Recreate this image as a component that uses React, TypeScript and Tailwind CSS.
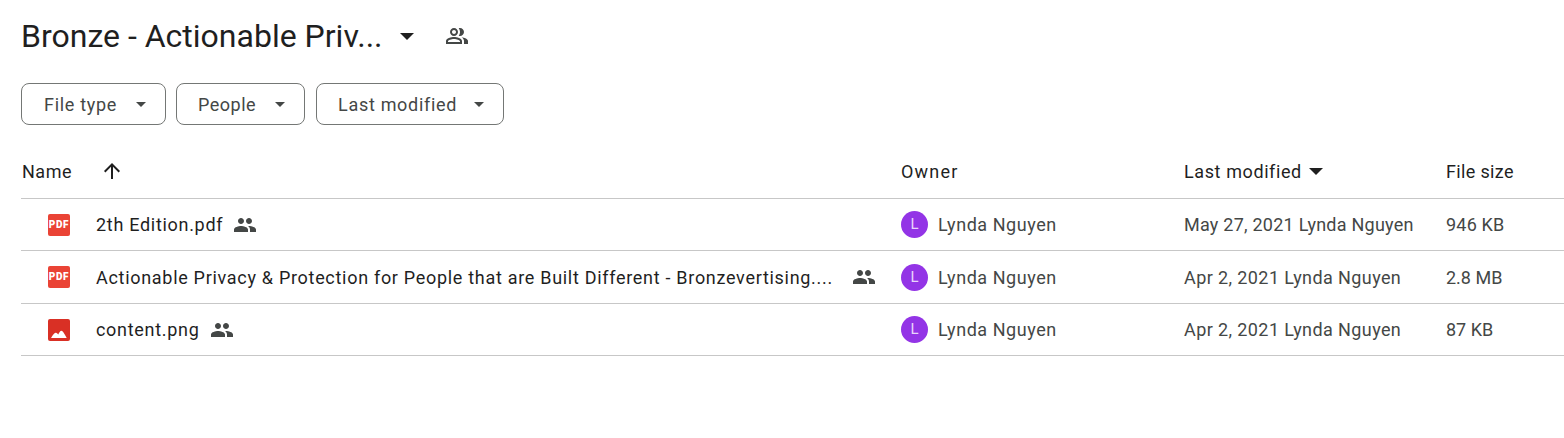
import React from "react";

function Caret({ className }: { className: string }) {
  return (
    <svg viewBox="0 0 10 5" className={className} fill="currentColor">
      <path d="M0 0l5 5 5-5z" />
    </svg>
  );
}

function People({ className }: { className: string }) {
  return (
    <svg viewBox="0 0 24 24" className={className} fill="currentColor">
      <path d="M16 11c1.66 0 2.99-1.34 2.99-3S17.66 5 16 5s-3 1.34-3 3 1.34 3 3 3zm-8 0c1.66 0 2.99-1.34 2.99-3S9.66 5 8 5 5 6.34 5 8s1.34 3 3 3zm0 2c-2.33 0-7 1.17-7 3.5V19h14v-2.5C15 14.17 10.33 13 8 13zm8 0c-.29 0-.62.02-.97.05 1.16.84 1.97 1.97 1.97 3.45V19h6v-2.5c0-2.33-4.67-3.5-7-3.5z" />
    </svg>
  );
}

function PeopleOutline({ className }: { className: string }) {
  return (
    <svg viewBox="0 0 24 24" className={className} fill="currentColor">
      <path d="M16.67 13.13C18.04 14.06 19 15.32 19 17v3h4v-3c0-2.18-3.57-3.47-6.33-3.87zM15 12c2.21 0 4-1.79 4-4s-1.79-4-4-4c-.47 0-.91.1-1.33.24C14.5 5.27 15 6.58 15 8s-.5 2.73-1.33 3.76c.42.14.86.24 1.33.24zM9 12c2.21 0 4-1.79 4-4s-1.79-4-4-4-4 1.79-4 4 1.79 4 4 4zm0-6c1.1 0 2 .9 2 2s-.9 2-2 2-2-.9-2-2 .9-2 2-2zM9 13c-2.67 0-8 1.34-8 4v3h16v-3c0-2.66-5.33-4-8-4zm6 5H3v-.99C3.2 16.29 6.3 15 9 15s5.8 1.29 6 2v1z" />
    </svg>
  );
}

function PdfIcon() {
  return (
    <div className="flex h-[22px] w-[22px] items-center justify-center rounded-[2px] bg-[#ea4335]">
      <span className="text-[10px] font-black leading-none tracking-[0.6px] text-white">PDF</span>
    </div>
  );
}

function ImageIcon() {
  return (
    <svg viewBox="0 0 22 22" className="h-[22px] w-[22px]">
      <rect width="22" height="22" rx="2" fill="#d93025" />
      <path d="M3 19c.9-1.2 1.8-3 3-4.2.8-.8 1.4-1 2-1 .7 0 1.3 1 2.2 1.6.9-1.4 2-3.6 3.3-3.6 1.4 0 2.4 2.4 3.4 4 .8 1.1 1.3 2.2 1.8 3.2z" fill="#fff" />
    </svg>
  );
}

function Filter({ label, w, track, pl }: { label: string; w: string; track: string; pl: string }) {
  return (
    <button className={`flex h-[42px] items-center justify-between rounded-[8px] border border-[#747775] pr-[19px] text-[18px] text-[#444746] ${pl} ${w}`}>
      <span className={track}>{label}</span>
      <Caret className="h-[5px] w-[10px]" />
    </button>
  );
}

const rows = [
  { name: "2th Edition.pdf", kind: "pdf", date: "May 27, 2021 Lynda Nguyen", dateTrack: "tracking-[0.24px]", size: "946 KB", sizeTrack: "tracking-[0.2px]", wide: false },
  { name: "Actionable Privacy & Protection for People that are Built Different - Bronzevertising....", kind: "pdf", date: "Apr 2, 2021 Lynda Nguyen", dateTrack: "tracking-[0.4px]", size: "2.8 MB", sizeTrack: "tracking-[0px]", wide: true },
  { name: "content.png", kind: "img", date: "Apr 2, 2021 Lynda Nguyen", dateTrack: "tracking-[0.4px]", size: "87 KB", sizeTrack: "tracking-[0px]", wide: false },
];

export default function App() {
  return (
    <div className="h-[438px] w-[1564px] overflow-hidden bg-white pl-[21px] text-[#1f1f1f] [font-family:Roboto,sans-serif]">
      <div className="flex h-[72px] items-center">
        <h1 className="w-[359px] whitespace-nowrap text-[32px] font-normal leading-none">Bronze - Actionable Priv...</h1>
        <Caret className="ml-[20px] h-[7px] w-[14px]" />
        <PeopleOutline className="ml-[31px] h-[24px] w-[24px] text-[#444746]" />
      </div>
      <div className="mt-[11px] flex">
        <Filter label="File type" w="w-[145px]" track="tracking-[0.7px]" pl="pl-[22px]" />
        <div className="w-[10px]" />
        <Filter label="People" w="w-[129px]" track="tracking-[0.5px]" pl="pl-[21px]" />
        <div className="w-[11px]" />
        <Filter label="Last modified" w="w-[188px]" track="tracking-[0.7px]" pl="pl-[21px]" />
      </div>
      <div className="mt-[21px] grid h-[53px] grid-cols-[880px_283px_262px_1fr] items-center border-b border-[#c7c7c7] pb-[2px] text-[18px]">
        <div className="flex items-center">
          <span className="ml-[1px] w-[78px] tracking-[0.5px]">Name</span>
          <svg viewBox="0 0 24 24" className="h-[24px] w-[24px]" fill="currentColor">
            <path d="M4 12l1.41 1.41L11 7.83V20h2V7.83l5.58 5.59L20 12l-8-8-8 8z" />
          </svg>
        </div>
        <div className="tracking-[1.2px]">Owner</div>
        <div className="flex items-center gap-[7px] tracking-[0.6px]">
          Last modified
          <Caret className="h-[7px] w-[14px]" />
        </div>
        <div className="tracking-[0.35px]">File size</div>
      </div>
      {rows.map((r, i) => (
        <div
          key={r.name}
          className={`grid grid-cols-[880px_283px_262px_1fr] items-center border-b border-[#c7c7c7] text-[18px] ${i === 1 ? "h-[53px]" : "h-[52px]"}`}
        >
          <div className="flex items-center pl-[27px]">
            {r.kind === "pdf" ? <PdfIcon /> : <ImageIcon />}
            <span className="ml-[26px] whitespace-nowrap tracking-[0.7px]">{r.name}</span>
            {r.wide ? (
              <People className="ml-auto mr-[25px] h-[24px] w-[24px] text-[#444746]" />
            ) : (
              <People className="ml-[10px] h-[24px] w-[24px] text-[#444746]" />
            )}
          </div>
          <div className="flex items-center gap-[10px] text-[#444746]">
            <div className="flex h-[27px] w-[27px] items-center justify-center rounded-full bg-[#9334e6] text-[15px] text-[#e8d5fa]">L</div>
            <span className="tracking-[0.55px]">Lynda Nguyen</span>
          </div>
          <div className={`whitespace-nowrap text-[#444746] ${r.dateTrack}`}>{r.date}</div>
          <div className={`text-[#444746] ${r.sizeTrack}`}>{r.size}</div>
        </div>
      ))}
    </div>
  );
}
